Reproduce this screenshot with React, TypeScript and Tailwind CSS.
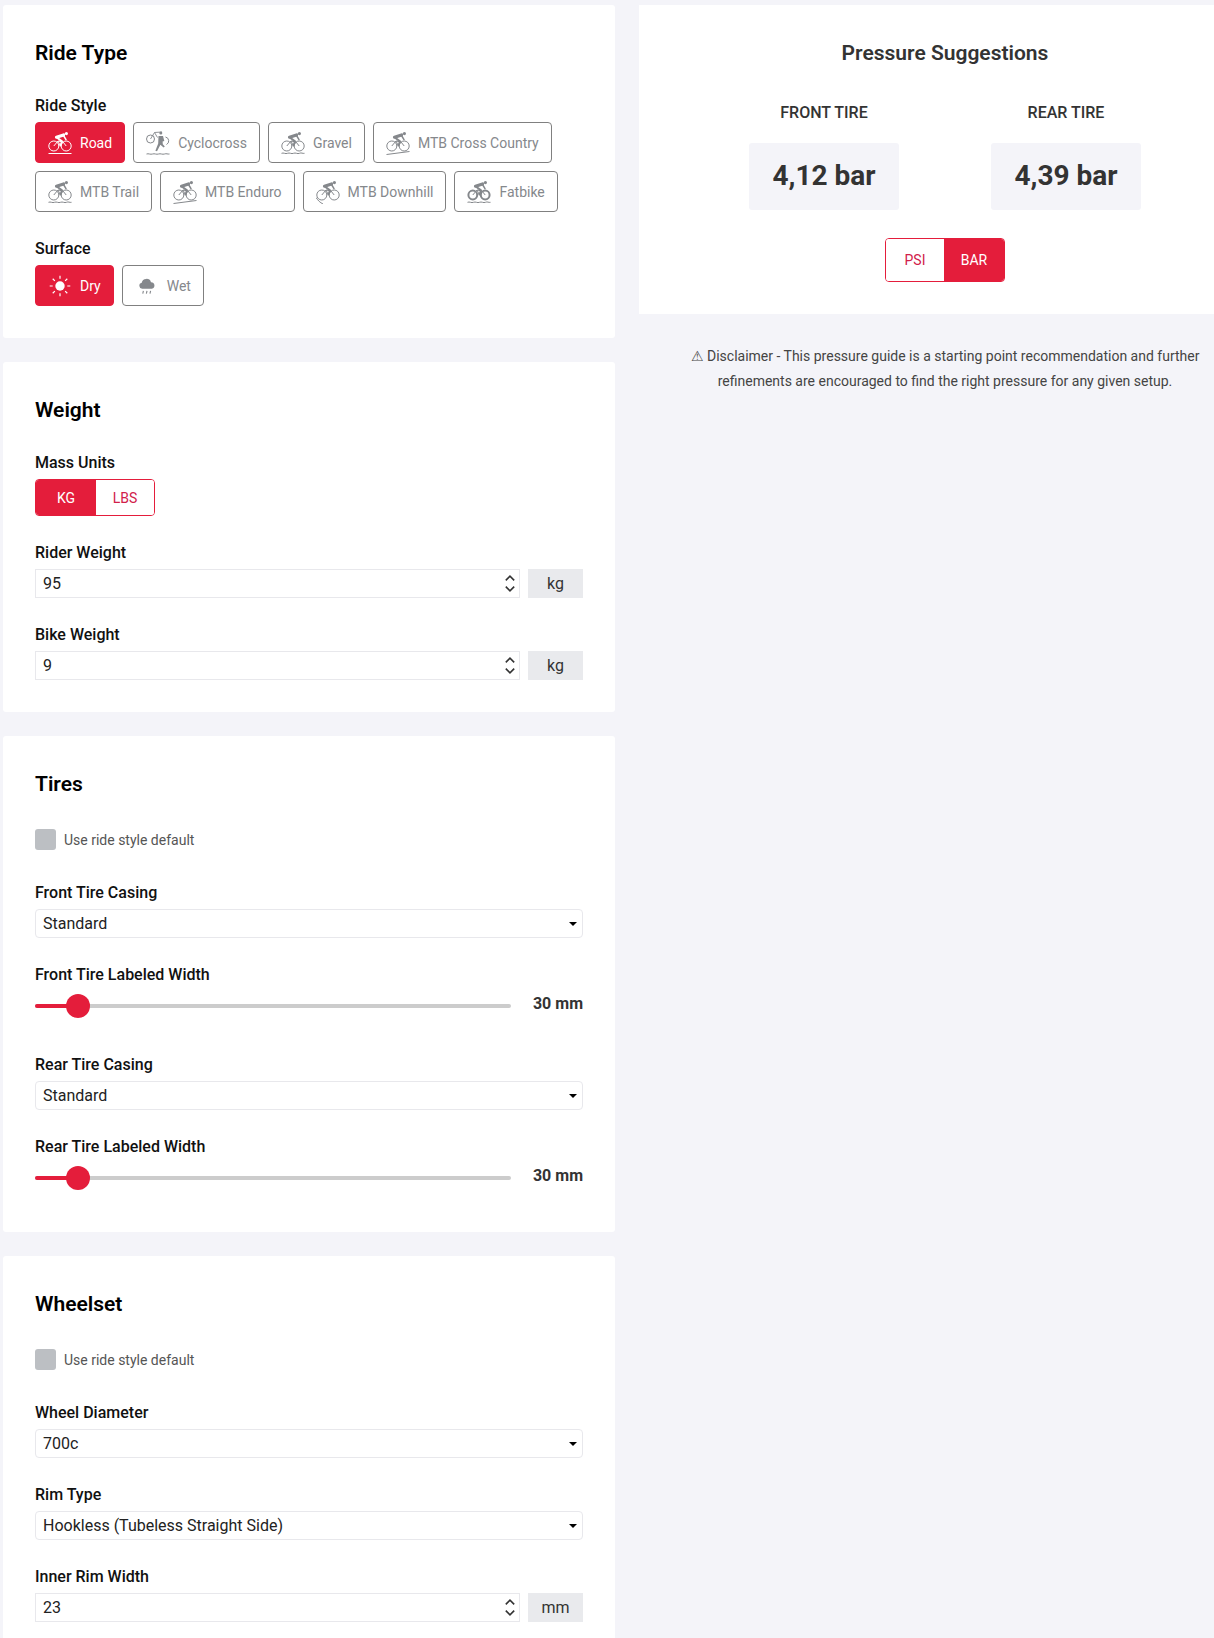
import React from "react";

const font = { fontFamily: "Roboto, 'Liberation Sans', sans-serif" };

type Ground = "flat" | "wave" | "slope" | "steep";

function BikeIcon({ ground = "flat", fat = false }: { ground?: Ground; fat?: boolean }) {
  return (
    <svg viewBox="0 0 24 24" className="w-6 h-6 shrink-0" fill="none" stroke="currentColor">
      <circle cx="5.8" cy="15" r={fat ? 4.4 : 5} strokeWidth={fat ? 2 : 1} />
      <circle cx="18.2" cy="15" r={fat ? 4.4 : 5} strokeWidth={fat ? 2 : 1} />
      <path d="M5.8 15 10 10l5 1 3.2 4M10 10l2.4 5" strokeWidth="1" />
      <circle cx="18.4" cy="2.6" r="1.6" fill="currentColor" stroke="none" />
      {/* rider: back, arm and leg */}
      <path d="M8.5 6.2 15.5 4" strokeWidth="3.2" strokeLinecap="round" />
      <path d="M15.5 4.5 18 8.6" strokeWidth="1.5" strokeLinecap="round" />
      <path d="M9.5 7 14 10.4 12.5 14.5" strokeWidth="2" strokeLinecap="round" strokeLinejoin="round" />
      {ground === "flat" && <path d="M0.5 22.5h23" strokeWidth="1" />}
      {ground === "wave" && <path d="M0.5 22.3c2-1 4 1 6 0s4 1 6 0 4 1 6 0 3 .5 5 0" strokeWidth="1" />}
      {ground === "slope" && <path d="M0.5 23.5 23.5 20.5" strokeWidth="1" />}
      {ground === "steep" && <path d="M0 17.5c2 3 4 5 7 6.5" strokeWidth="1" />}
    </svg>
  );
}

function CrossIcon() {
  return (
    <svg viewBox="0 0 24 24" className="w-6 h-6 shrink-0" fill="none" stroke="currentColor">
      <circle cx="4.5" cy="8" r="4" strokeWidth="1" />
      <path d="M19.5 6a4 4 0 0 1 1 7.5" strokeWidth="1" />
      <path d="M4.5 8 8.5 1.5l3 5M8.5 1.5 16 1" strokeWidth="0.9" />
      <circle cx="14.8" cy="2" r="1.5" fill="currentColor" stroke="none" />
      <path d="M12.5 5h4.5l1.3 5-1.7.5.2 2.8 2 2.2-1.2 1-3.2-2.8-3.4 6.6-1.6-.6 2.8-7.2z" fill="currentColor" stroke="none" />
      <path d="M0.5 23c2-.8 4 .8 6 0s4 .8 6 0 4 .8 6 0 3 .4 5 0" strokeWidth="1" />
    </svg>
  );
}

function SunIcon() {
  return (
    <svg viewBox="-2 -2 28 28" className="w-6 h-6 shrink-0" fill="none" stroke="currentColor" strokeWidth="1.4">
      <circle cx="12" cy="12" r="5.5" fill="currentColor" stroke="none" />
      <path d="M12 0v3.5M12 20.5V24M0 12h3.5M20.5 12H24M3.5 3.5l2.5 2.5M18 18l2.5 2.5M3.5 20.5 6 18M18 6l2.5-2.5" />
    </svg>
  );
}

function RainIcon() {
  return (
    <svg viewBox="-3 -3 30 30" className="w-6 h-6 shrink-0" fill="none" stroke="currentColor">
      <path d="M6 15.5a3.8 3.8 0 0 1-.6-7.5A6 6 0 0 1 17 7.2a4.2 4.2 0 0 1 1 8.3z" fill="currentColor" stroke="none" />
      <path d="M7.5 18l-.8 3.5M12 18l-.8 3.5M16.5 18l-.8 3.5" strokeWidth="1.4" />
    </svg>
  );
}

function OptionButton({
  label,
  icon,
  active = false,
}: {
  label: string;
  icon: React.ReactNode;
  active?: boolean;
}) {
  return (
    <button
      className={
        active
          ? "h-[41px] flex items-center gap-2 px-3 rounded-[4px] border border-[#e41d3b] bg-[#e41d3b] text-white text-sm"
          : "h-[41px] flex items-center gap-2 px-3 rounded-[4px] border border-[#808080] bg-white text-[#85888c] text-sm"
      }
    >
      {icon}
      <span>{label}</span>
    </button>
  );
}

function Segmented({ options, active, widths }: { options: string[]; active: string; widths: string[] }) {
  return (
    <div className="flex border border-[#e41d3b] rounded-[4px] overflow-hidden w-fit h-full">
      {options.map((o, i) => (
        <div
          key={o}
          className={
            (o === active ? "bg-[#e41d3b] text-white " : "bg-white text-[#d1204a] ") +
            widths[i] +
            " flex items-center justify-center text-sm"
          }
        >
          {o}
        </div>
      ))}
    </div>
  );
}

function Label({ children, className = "" }: { children: React.ReactNode; className?: string }) {
  return <div className={"text-base leading-6 font-medium text-[#111] " + className}>{children}</div>;
}

function NumberField({ value, unit }: { value: string; unit: string }) {
  return (
    <div className="flex gap-2 mt-1">
      <div className="relative flex-1">
        <input
          readOnly
          value={value}
          className="w-full h-[29px] border border-[#e8e8ec] bg-white px-[7px] text-base text-[#222] outline-none"
        />
        <svg viewBox="0 0 12 20" className="absolute right-[3px] top-[4px] w-[14px] h-[21px]" fill="none" stroke="#333" strokeWidth="1.5">
          <path d="M2 7l4-4 4 4M2 13l4 4 4-4" />
        </svg>
      </div>
      <div className="w-[55px] h-[29px] bg-[#e9eaed] flex items-center justify-center text-base text-[#333]">
        {unit}
      </div>
    </div>
  );
}

function SelectField({ value }: { value: string }) {
  return (
    <div className="relative mt-1">
      <div className="h-[29px] border border-[#e8e8ec] rounded-[4px] bg-white px-[7px] flex items-center text-base text-[#222]">
        {value}
      </div>
      <div className="absolute right-[6px] top-[13px] w-0 h-0 border-x-[4px] border-x-transparent border-t-[4px] border-t-black" />
    </div>
  );
}

function SliderField({ value }: { value: string }) {
  return (
    <div className="flex items-center mt-[7px] h-6">
      <div className="relative flex-1 h-1 rounded-full bg-[#cccccc]">
        <div className="absolute left-0 top-0 h-1 w-[43px] rounded-l-full bg-[#e41d3b]" />
        <div className="absolute left-[31px] top-[-10px] w-6 h-6 rounded-full bg-[#e41d3b]" />
      </div>
      <div className="w-[72px] text-right text-base font-bold text-[#333] -mt-1">{value}</div>
    </div>
  );
}

function Checkbox() {
  return (
    <div className="flex items-center gap-2 mt-[31px]">
      <div className="w-[21px] h-[21px] rounded-[3px] bg-[#bcbfc3]" />
      <span className="text-sm text-[#555]">Use ride style default</span>
    </div>
  );
}

function Card({ title, children, className = "" }: { title: string; children: React.ReactNode; className?: string }) {
  return (
    <section className={"bg-white rounded-[3px] px-8 pt-[34px] " + className}>
      <h2 className="text-[21px] leading-7 font-semibold text-black">{title}</h2>
      {children}
    </section>
  );
}

export default function App() {
  return (
    <div style={font} className="h-[1638px] overflow-hidden bg-[#f4f4f9] flex pt-[5px] pl-[3px]">
      <div className="w-[612px] shrink-0 flex flex-col gap-6">
        <Card title="Ride Type" className="pb-8">
          <Label className="mt-[27px]">Ride Style</Label>
          <div className="flex flex-wrap gap-2 mt-1">
            <OptionButton active label="Road" icon={<BikeIcon />} />
            <OptionButton label="Cyclocross" icon={<CrossIcon />} />
            <OptionButton label="Gravel" icon={<BikeIcon ground="wave" />} />
            <OptionButton label="MTB Cross Country" icon={<BikeIcon ground="slope" />} />
            <OptionButton label="MTB Trail" icon={<BikeIcon ground="wave" />} />
            <OptionButton label="MTB Enduro" icon={<BikeIcon ground="slope" />} />
            <OptionButton label="MTB Downhill" icon={<BikeIcon ground="steep" />} />
            <OptionButton label="Fatbike" icon={<BikeIcon ground="wave" fat />} />
          </div>
          <Label className="mt-[25px]">Surface</Label>
          <div className="flex gap-2 mt-1">
            <OptionButton active label="Dry" icon={<SunIcon />} />
            <OptionButton label="Wet" icon={<RainIcon />} />
          </div>
        </Card>

        <Card title="Weight" className="pb-8">
          <Label className="mt-[27px]">Mass Units</Label>
          <div className="h-[37px] mt-1">
            <Segmented options={["KG", "LBS"]} active="KG" widths={["w-[60px]", "w-[58px]"]} />
          </div>
          <Label className="mt-[25px]">Rider Weight</Label>
          <NumberField value="95" unit="kg" />
          <Label className="mt-[25px]">Bike Weight</Label>
          <NumberField value="9" unit="kg" />
        </Card>

        <Card title="Tires" className="pb-[42px]">
          <Checkbox />
          <Label className="mt-[31px]">Front Tire Casing</Label>
          <SelectField value="Standard" />
          <Label className="mt-[25px]">Front Tire Labeled Width</Label>
          <SliderField value="30 mm" />
          <Label className="mt-[35px]">Rear Tire Casing</Label>
          <SelectField value="Standard" />
          <Label className="mt-[25px]">Rear Tire Labeled Width</Label>
          <SliderField value="30 mm" />
        </Card>

        <Card title="Wheelset" className="pb-8">
          <Checkbox />
          <Label className="mt-[31px]">Wheel Diameter</Label>
          <SelectField value="700c" />
          <Label className="mt-[25px]">Rim Type</Label>
          <SelectField value="Hookless (Tubeless Straight Side)" />
          <Label className="mt-[25px]">Inner Rim Width</Label>
          <NumberField value="23" unit="mm" />
        </Card>
      </div>

      <div className="ml-6 w-[612px] shrink-0">
        <div className="bg-white h-[309px] pt-[34px] flex flex-col items-center">
          <h2 className="text-[21px] leading-7 font-semibold text-[#333]">Pressure Suggestions</h2>
          <div className="flex mt-[34px]">
            <div className="w-[242px] flex flex-col items-center">
              <div className="text-base leading-6 font-medium text-[#333]">FRONT TIRE</div>
              <div className="mt-[18px] pb-[2px] w-[150px] h-[67px] rounded-[3px] bg-[#f4f4f9] flex items-center justify-center text-[28px] font-bold text-[#333]">
                4,12 bar
              </div>
            </div>
            <div className="w-[242px] flex flex-col items-center">
              <div className="text-base leading-6 font-medium text-[#333]">REAR TIRE</div>
              <div className="mt-[18px] pb-[2px] w-[150px] h-[67px] rounded-[3px] bg-[#f4f4f9] flex items-center justify-center text-[28px] font-bold text-[#333]">
                4,39 bar
              </div>
            </div>
          </div>
          <div className="h-[44px] mt-7">
            <Segmented options={["PSI", "BAR"]} active="BAR" widths={["w-[58px]", "w-[60px]"]} />
          </div>
        </div>
        <p className="mt-[30px] px-[48px] text-center text-sm leading-[25px] text-[#444]">
          ⚠ Disclaimer - This pressure guide is a starting point recommendation and further refinements are encouraged to find the right pressure for any given setup.
        </p>
      </div>
    </div>
  );
}
